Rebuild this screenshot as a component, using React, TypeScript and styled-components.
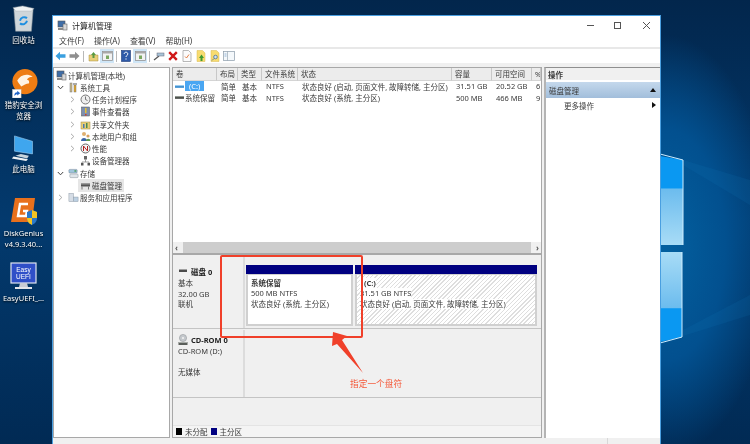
import React from 'react'
import styled, { createGlobalStyle } from 'styled-components'

const GlobalStyle = createGlobalStyle`
  html, body {
    margin: 0;
    padding: 0;
    background: #03264a;
  }
  * {
    box-sizing: border-box;
  }
`

const Screen = styled.div`
  position: relative;
  display: flex;
  width: 750px;
  height: 444px;
  overflow: hidden;
  font-family: 'Noto Sans', 'Noto Sans CJK SC', sans-serif;
  font-size: 7.5px;
  color: #3a3a3a;
  background: radial-gradient(ellipse 110px 210px at 665px 245px, #03609f 0%, #02508f 55%, rgba(2, 60, 110, 0) 100%),
    linear-gradient(180deg, #02264c 0%, #033a6e 50%, #012a54 100%);
  filter: blur(0.4px);
`
const Wallpaper = styled.svg`
  position: absolute;
  top: 0;
  left: 660px;
`
const IconColumn = styled.div`
  display: flex;
  flex-direction: column;
  flex: none;
  align-items: center;
  width: 47px;
  margin-top: 3px;
`
const DesktopItem = styled.div<{ $top: number }>`
  display: flex;
  flex-direction: column;
  align-items: center;
  width: 47px;
  margin-top: ${(p) => p.$top}px;
`
const DesktopLabel = styled.div`
  margin-top: 2px;
  font-size: 7.5px;
  line-height: 11px;
  color: #fff;
  text-align: center;
  text-shadow: 0 1px 2px #000;
  white-space: pre-line;
`
const Window = styled.div`
  position: relative;
  display: flex;
  flex-direction: column;
  flex: none;
  width: 609px;
  height: 440px;
  margin-top: 15px;
  margin-left: 5px;
  background: #fff;
  border: 1px solid #4a9fe0;
`
const TitleBar = styled.div`
  display: flex;
  flex: none;
  gap: 4px;
  align-items: center;
  height: 18px;
  padding-left: 4px;
  font-size: 8px;
  color: #222;
`
const CaptionButtons = styled.div`
  display: flex;
  gap: 15px;
  align-items: center;
  margin-left: auto;
  margin-right: 9px;
`
const MenuBar = styled.div`
  display: flex;
  flex: none;
  gap: 10px;
  align-items: center;
  height: 15px;
  padding-left: 6px;
  font-size: 8px;
  border-bottom: 2px solid #e8e8e8;
`
const Toolbar = styled.div`
  display: flex;
  flex: none;
  align-items: center;
  height: 14px;
`
const ToolButton = styled.div<{ $active?: boolean }>`
  display: flex;
  align-items: center;
  justify-content: center;
  width: 14px;
  height: 14px;
  background: ${(p) => (p.$active ? '#cfe6f7' : 'transparent')};
`
const ToolSep = styled.div`
  width: 1px;
  height: 11px;
  margin: 0 2px;
  background: #b8b8b8;
`
const Content = styled.div`
  display: flex;
  flex: none;
  gap: 2px;
  padding-top: 4px;
  background: #f0f0f0;
`
const TreePanel = styled.div`
  flex: none;
  width: 117px;
  height: 371px;
  padding-top: 1px;
  background: #fff;
  border: 1px solid #a8a8a8;
`
const TreeRow = styled.div<{ $level: number }>`
  display: flex;
  align-items: center;
  height: 12.25px;
  padding-left: ${(p) => (p.$level === 0 ? 0 : (p.$level - 1) * 12)}px;
  white-space: nowrap;
`
const ChevronBox = styled.span`
  display: inline-flex;
  flex: none;
  align-items: center;
  justify-content: center;
  width: 12px;
`
const TreeLabel = styled.span<{ $selected?: boolean }>`
  display: inline-flex;
  align-items: center;
  height: 12.25px;
  padding-right: 2px;
  background: ${(p) => (p.$selected ? '#e6e6e6' : 'transparent')};
`
const TreeIcon = styled.span`
  display: inline-flex;
  flex: none;
  margin: 0 1px 0 2px;
`
const MainPanel = styled.div`
  display: flex;
  flex: none;
  flex-direction: column;
  width: 370px;
  height: 371px;
  border: 1px solid #a8a8a8;
`
const ListPanel = styled.div`
  display: flex;
  flex: none;
  flex-direction: column;
  height: 187px;
  background: #fff;
  border-bottom: 2px solid #a8a8a8;
`
const HeaderRow = styled.div`
  display: grid;
  flex: none;
  grid-template-columns: 44px 21px 24px 36px 154px 40px 40px 9px;
  height: 12.5px;
`
const HeaderCell = styled.div`
  display: flex;
  align-items: center;
  padding-left: 3px;
  overflow: hidden;
  background: #ececec;
  border-right: 1px solid #c8c8c8;
  border-bottom: 1px solid #d4d4d4;
  white-space: nowrap;
`
const DataRow = styled.div`
  display: grid;
  grid-template-columns: 44px 21px 24px 36px 154px 40px 40px 9px;
  height: 11.5px;
`
const DataCell = styled.div`
  display: flex;
  gap: 1px;
  align-items: center;
  padding-left: 4px;
  overflow: hidden;
  white-space: nowrap;
`
const VolumeCell = styled(DataCell)`
  padding-left: 2px;
`
const VolumeName = styled.span<{ $selected?: boolean }>`
  padding: 0 ${(p) => (p.$selected ? '4px' : '0')};
  color: ${(p) => (p.$selected ? '#fff' : 'inherit')};
  background: ${(p) => (p.$selected ? '#4aa6f2' : 'transparent')};
`
const Rows = styled.div`
  flex: 1;
`
const ScrollBar = styled.div`
  display: flex;
  flex: none;
  align-items: center;
  justify-content: space-between;
  height: 11px;
  padding: 0 2px;
  font-size: 8px;
  font-weight: 700;
  color: #555;
  background: linear-gradient(#f0f0f0, #f0f0f0) left/10px 100% no-repeat,
    linear-gradient(#f0f0f0, #f0f0f0) right/10px 100% no-repeat, #cdcdcd;
`
const GraphArea = styled.div`
  display: flex;
  flex: 1;
  flex-direction: column;
  background: #f0f0f0;
`
const DiskRow = styled.div<{ $height: number; $mt?: number }>`
  display: flex;
  flex: none;
  height: ${(p) => p.$height}px;
  margin-top: ${(p) => p.$mt ?? 0}px;
  border-bottom: 1px solid #c4c4c4;
`
const DiskLabel = styled.div<{ $pt: number }>`
  flex: none;
  width: 72px;
  padding: ${(p) => p.$pt}px 0 0 5px;
  line-height: 10.5px;
  border-right: 2px solid #dcdcdc;
`
const DiskName = styled.div`
  display: flex;
  gap: 3px;
  align-items: center;
  height: 12px;
  font-weight: 700;
  color: #222;
`
const PartitionRow = styled.div`
  display: flex;
  flex: 1;
  gap: 2px;
  padding: 10px 4px 2px 1px;
`
const Partition = styled.div<{ $grow: number }>`
  display: flex;
  flex: ${(p) => p.$grow};
  flex-direction: column;
  min-width: 0;
`
const PartitionHead = styled.div`
  flex: none;
  height: 9px;
  background: #000080;
`
const PartitionBody = styled.div<{ $hatched?: boolean }>`
  flex: 1;
  padding: 3px 3px 0 3px;
  line-height: 10.3px;
  background: ${(p) =>
    p.$hatched
      ? 'repeating-linear-gradient(135deg, #fff 0 2px, #dedede 2px 3px)'
      : '#fff'};
  border: 2px solid #d0d0d0;
  border-top-width: 1px;
`
const PartitionLine = styled.div<{ $bold?: boolean }>`
  width: fit-content;
  font-weight: ${(p) => (p.$bold ? 700 : 400)};
  white-space: nowrap;
  background: #fff;
`
const Spacer = styled.div`
  flex: 1;
`
const Legend = styled.div`
  display: flex;
  flex: none;
  gap: 3px;
  align-items: center;
  height: 12px;
  padding-left: 3px;
  background: #f4f4f4;
  border-top: 1px solid #e4e4e4;
`
const Swatch = styled.span<{ $color: string }>`
  width: 6px;
  height: 7px;
  background: ${(p) => p.$color};
`
const ActionsPanel = styled.div`
  flex: 1;
  height: 371px;
  background: #fff;
  border-top: 1px solid #8f8f8f;
  border-left: 2px solid #b4b4b4;
`
const ActionsTitle = styled.div`
  display: flex;
  align-items: center;
  height: 12px;
  padding-left: 2px;
  font-weight: 700;
  background: #f0f0f0;
`
const ActionsGroup = styled.div`
  display: flex;
  align-items: center;
  justify-content: space-between;
  height: 16px;
  margin-top: 2px;
  padding: 0 4px 0 3px;
  background: linear-gradient(#c4d8ec, #a2bedb);
`
const ActionsItem = styled.div`
  display: flex;
  align-items: center;
  justify-content: space-between;
  height: 14px;
  padding: 0 4px 0 18px;
`
const StatusBar = styled.div`
  flex: 1;
  background: linear-gradient(#d8d8d8, #d8d8d8) 554px 0/1px 100% no-repeat, #f0f0f0;
`
const Highlight = styled.div`
  position: absolute;
  top: 255px;
  left: 220px;
  width: 143px;
  height: 83px;
  border: 2px solid #f0402a;
  border-radius: 2px;
`
const CalloutArrow = styled.svg`
  position: absolute;
  top: 330px;
  left: 328px;
`
const CalloutText = styled.div`
  position: absolute;
  top: 378px;
  left: 350px;
  font-size: 8.7px;
  line-height: 12px;
  color: #f4593a;
`

const Monitor = () => (
  <svg width="11" height="11" viewBox="0 0 11 11">
    <rect x="1" y="1" width="7" height="6" fill="#3f6ea8" stroke="#555" strokeWidth=".6" />
    <rect x="6" y="4" width="4" height="6" fill="#d8d8d8" stroke="#666" strokeWidth=".6" />
    <rect x="1" y="8" width="5" height="2" fill="#8a8a8a" />
  </svg>
)
const Tools = () => (
  <svg width="11" height="11" viewBox="0 0 11 11">
    <rect x="2" y="1" width="2" height="9" fill="#c9b98a" stroke="#777" strokeWidth=".5" />
    <rect x="6" y="3" width="2" height="7" fill="#e8a820" stroke="#777" strokeWidth=".5" />
    <path d="M5 1h4v2H5z" fill="#aaa" />
  </svg>
)
const Clock = () => (
  <svg width="11" height="11" viewBox="0 0 11 11">
    <circle cx="5.5" cy="5.5" r="4.5" fill="#eee" stroke="#777" />
    <path d="M5.5 2.5v3l2 1" fill="none" stroke="#555" strokeWidth=".8" />
  </svg>
)
const EventLog = () => (
  <svg width="11" height="11" viewBox="0 0 11 11">
    <rect x="1.5" y="1" width="8" height="9" fill="#7d8fb0" stroke="#555" strokeWidth=".5" />
    <rect x="5" y="2" width="1.5" height="5" fill="#e8c030" />
    <rect x="5" y="8" width="1.5" height="1.5" fill="#d04020" />
  </svg>
)
const Share = () => (
  <svg width="11" height="11" viewBox="0 0 11 11">
    <rect x="1" y="3" width="9" height="7" fill="#e8cf78" stroke="#a08840" strokeWidth=".5" />
    <rect x="3" y="5" width="1.5" height="4" fill="#4a78b0" />
    <rect x="6" y="4" width="1.5" height="5" fill="#4a8a50" />
  </svg>
)
const Users = () => (
  <svg width="11" height="11" viewBox="0 0 11 11">
    <circle cx="4" cy="3" r="2" fill="#e0b070" />
    <path d="M1 10c0-4 6-4 6 0z" fill="#3a64a8" />
    <circle cx="8" cy="5" r="1.6" fill="#d8a060" />
    <path d="M6 10c0-3 4.5-3 4.5 0z" fill="#5a9a50" />
  </svg>
)
const Perf = () => (
  <svg width="11" height="11" viewBox="0 0 11 11">
    <circle cx="5.5" cy="5.5" r="4.5" fill="#f4f4f4" stroke="#666" />
    <path d="M3.5 8V3l4 5V3" fill="none" stroke="#b02020" strokeWidth="1" />
  </svg>
)
const Devices = () => (
  <svg width="11" height="11" viewBox="0 0 11 11">
    <rect x="4" y="1" width="3" height="3.5" fill="#666" />
    <path d="M5.5 4.5V7M2 9V7h7v2" fill="none" stroke="#777" strokeWidth=".7" />
    <rect x="1" y="8" width="2.5" height="2.5" fill="#555" />
    <rect x="7.5" y="8" width="2.5" height="2.5" fill="#555" />
  </svg>
)
const Storage = () => (
  <svg width="11" height="11" viewBox="0 0 12 11">
    <rect x="1" y="1" width="9" height="4" rx="1" fill="#9fc4dc" stroke="#708090" strokeWidth=".5" />
    <rect x="2" y="6" width="9" height="4" rx="1" fill="#dfe5ea" stroke="#808890" strokeWidth=".5" />
    <rect x="7" y="2" width="2" height="1.5" fill="#4a9a50" />
  </svg>
)
const DiskManage = () => (
  <svg width="11" height="11" viewBox="0 0 11 11">
    <rect x="1" y="3.5" width="9" height="3" fill="#555" />
    <rect x="1" y="3.5" width="9" height="1" fill="#999" />
    <path d="M2 6.5v3M8.5 6.5v3" stroke="#777" />
  </svg>
)
const DiskBar = () => (
  <svg width="10" height="11" viewBox="0 0 10 11">
    <rect x="1" y="2" width="8" height="3" fill="#4a4a4a" />
    <rect x="1" y="2" width="8" height="1" fill="#a0a0a0" />
  </svg>
)
const CdDrive = () => (
  <svg width="10" height="12" viewBox="0 0 10 12">
    <circle cx="5" cy="4" r="3.6" fill="#c4c8cc" stroke="#8a8e92" strokeWidth=".5" />
    <circle cx="5" cy="4" r="1" fill="#f4f4f4" />
    <rect x=".5" y="8" width="9" height="3" fill="#5a5e5a" />
    <rect x=".5" y="8" width="9" height="1" fill="#a8aca8" />
  </svg>
)
const Services = () => (
  <svg width="11" height="11" viewBox="0 0 12 11">
    <rect x="1" y="1" width="5" height="9" fill="#d6dde6" stroke="#8a96a4" strokeWidth=".5" />
    <rect x="6" y="5" width="5" height="5" fill="#bcd0e2" stroke="#8a96a4" strokeWidth=".5" />
  </svg>
)
const VolumeIcon = ({ dark }: { dark?: boolean }) => (
  <svg width="9" height="5" viewBox="0 0 10 5">
    <rect x="0" y="1" width="10" height="3" fill={dark ? '#4a4f4a' : '#3f8fd0'} />
    <rect x="0" y="1" width="10" height="1" fill={dark ? '#9aa09a' : '#a8d4f4'} />
  </svg>
)
const OpenChevron = () => (
  <svg width="7" height="5" viewBox="0 0 7 5">
    <path d="M.8 1 3.5 3.8 6.2 1" fill="none" stroke="#444" strokeWidth="1" />
  </svg>
)
const ClosedChevron = () => (
  <svg width="5" height="7" viewBox="0 0 5 7">
    <path d="M1 .8 3.8 3.5 1 6.2" fill="none" stroke="#a8a8a8" strokeWidth="1" />
  </svg>
)

const ArrowTool = ({ color, flip }: { color: string; flip?: boolean }) => (
  <svg width="11" height="10" viewBox="0 0 11 10" style={flip ? { transform: 'scaleX(-1)' } : undefined}>
    <path d="M0.5 5 5 .8v2.4h5.5v3.6H5v2.4z" fill={color} />
  </svg>
)
const FolderUp = () => (
  <svg width="11" height="11" viewBox="0 0 11 11">
    <path d="M1 4h9v6H1z" fill="#e8cf78" stroke="#a88c3c" strokeWidth=".5" />
    <path d="M5.5 1 8 4H6.5v3h-2V4H3z" fill="#5a9a40" />
  </svg>
)
const PaneTool = () => (
  <svg width="11" height="10" viewBox="0 0 11 10">
    <rect x=".5" y=".5" width="10" height="9" fill="#f2f2f2" stroke="#888" strokeWidth=".7" />
    <rect x=".5" y=".5" width="10" height="2" fill="#a8a8a8" />
    <rect x="4" y="4.5" width="3" height="3.5" fill="#7aa860" />
  </svg>
)
const HelpTool = () => (
  <svg width="10" height="12" viewBox="0 0 10 12">
    <rect x=".5" y=".5" width="9" height="11" fill="#2f5aa8" stroke="#1c3a78" strokeWidth=".6" />
    <path d="M3.2 4c0-2.4 3.6-2.4 3.6 0 0 1.4-1.8 1.4-1.8 3M5 8.4v1.2" fill="none" stroke="#fff" strokeWidth="1" />
  </svg>
)
const ConnectTool = () => (
  <svg width="12" height="10" viewBox="0 0 12 10">
    <path d="M1 9 6 5" stroke="#555" strokeWidth="1.2" />
    <rect x="4" y="2" width="7" height="3" fill="#a8c4d8" stroke="#667" strokeWidth=".5" />
  </svg>
)
const DeleteTool = () => (
  <svg width="10" height="10" viewBox="0 0 10 10">
    <path d="M1.2 1.2 8.8 8.8M8.8 1.2 1.2 8.8" stroke="#d01818" strokeWidth="2.4" />
  </svg>
)
const DocTool = () => (
  <svg width="10" height="12" viewBox="0 0 10 12">
    <path d="M1 .5h5.5L9 3v8.5H1z" fill="#fbfbfb" stroke="#999" strokeWidth=".7" />
    <path d="M3 6.5 4.5 8 7 4.5" fill="none" stroke="#e07030" strokeWidth=".9" />
  </svg>
)
const YellowDoc = ({ kind }: { kind: 'up' | 'search' }) => (
  <svg width="10" height="12" viewBox="0 0 10 12">
    <path d="M1 .5h5.5L9 3v8.5H1z" fill="#f8dc70" stroke="#d8b850" strokeWidth=".5" />
    {kind === 'up' ? (
      <path d="M5.5 4.5 8 8H6.5v3h-2V8H3z" fill="#3f9a30" />
    ) : (
      <g fill="none" stroke="#5a7a9a" strokeWidth=".9">
        <circle cx="5.5" cy="7" r="1.8" fill="#cfe4f4" />
        <path d="M4 8.5 2 10.5" />
      </g>
    )}
  </svg>
)
const ListTool = () => (
  <svg width="12" height="10" viewBox="0 0 12 10">
    <rect x=".5" y=".5" width="11" height="9" fill="#f4f8fb" stroke="#8a9aa8" strokeWidth=".7" />
    <path d="M4.5 .5v9" stroke="#8a9aa8" strokeWidth=".6" />
    <path d="M1.5 3h2M1.5 5h2" stroke="#6a9ac8" strokeWidth=".7" />
  </svg>
)

const RecycleBin = () => (
  <svg width="23" height="28" viewBox="0 0 26 32">
    <path d="M2 5 4 30h18l2-25z" fill="#cfd6da" stroke="#8a949a" strokeWidth=".6" />
    <path d="M1 3 12 1l13 3-3 3H4z" fill="#eef1f3" stroke="#9aa4aa" strokeWidth=".5" />
    <path d="M9 18a5 5 0 0 1 8-3M17 18a5 5 0 0 1-8 3" fill="none" stroke="#1f8fe0" strokeWidth="2.2" />
  </svg>
)
const BrowserIcon = () => (
  <svg width="30" height="29" viewBox="0 0 30 30">
    <circle cx="16" cy="13" r="13" fill="#ee7d14" />
    <path d="M8 12c3-6 10-8 16-4-3 0-5 1-6 3 2 0 3 2 2 4-3 0-5 2-8 3-1-2-3-3-4-6z" fill="#fff4e4" />
    <rect x="3" y="21" width="9" height="9" fill="#fff" stroke="#bbb" strokeWidth=".4" />
    <path d="M5 28c0-3 1-4 3-4v-1.5l3 2.5-3 2.5V26c-1 0-2 .6-3 2z" fill="#1f64c8" />
  </svg>
)
const PcIcon = () => (
  <svg width="29" height="27" viewBox="0 0 30 30">
    <path d="M5 1 25 7v14L5 18z" fill="#3fa6ee" stroke="#a8d4f4" strokeWidth=".6" />
    <path d="M12 21l9 2-2 3-13-3z" fill="#c8d4dc" />
    <path d="M4 24l16 3-2 2L2 26z" fill="#eef2f4" />
  </svg>
)
const DiskGeniusIcon = () => (
  <svg width="30" height="29" viewBox="0 0 30 29">
    <path d="M6 1h20l-3 24H2z" fill="#e8701c" />
    <path d="M19 7h-8l-2 12h8l1-5h-4" fill="none" stroke="#fff" strokeWidth="2.4" />
    <path d="M18 15l5-2 5 2v6c0 4-3 6-5 7-2-1-5-3-5-7z" fill="#2a78c8" />
    <path d="M23 13l5 2v6h-5zM18 21h5v7c-2-1-5-3-5-7z" fill="#f4c420" />
  </svg>
)
const UefiIcon = () => (
  <svg width="30" height="29" viewBox="0 0 30 29">
    <rect x="2" y="1" width="25" height="20" fill="#2f4fc8" stroke="#dfe4ee" strokeWidth="1.2" />
    <text x="14.5" y="10" fontSize="6.5" fill="#fff" textAnchor="middle" fontFamily="Liberation Sans">Easy</text>
    <text x="14.5" y="17" fontSize="6.5" fill="#fff" textAnchor="middle" fontFamily="Liberation Sans">UEFI</text>
    <path d="M11 21h7l1 4h-9z" fill="#c8ccd4" />
    <rect x="6" y="25" width="17" height="2" fill="#e4e6ea" />
  </svg>
)

const tree: { level: number; chevron?: 'open' | 'closed'; icon: React.ReactNode; text: string; selected?: boolean }[] = [
  { level: 0, icon: <Monitor />, text: '计算机管理(本地)' },
  { level: 1, chevron: 'open', icon: <Tools />, text: '系统工具' },
  { level: 2, chevron: 'closed', icon: <Clock />, text: '任务计划程序' },
  { level: 2, chevron: 'closed', icon: <EventLog />, text: '事件查看器' },
  { level: 2, chevron: 'closed', icon: <Share />, text: '共享文件夹' },
  { level: 2, chevron: 'closed', icon: <Users />, text: '本地用户和组' },
  { level: 2, chevron: 'closed', icon: <Perf />, text: '性能' },
  { level: 2, icon: <Devices />, text: '设备管理器' },
  { level: 1, chevron: 'open', icon: <Storage />, text: '存储' },
  { level: 2, icon: <DiskManage />, text: '磁盘管理', selected: true },
  { level: 1, chevron: 'closed', icon: <Services />, text: '服务和应用程序' },
]

const columns = ['卷', '布局', '类型', '文件系统', '状态', '容量', '可用空间', '%']

const App = () => {
  return (
    <Screen>
      <GlobalStyle />
      <Wallpaper width="90" height="444" viewBox="0 0 90 444">
        <defs>
          <linearGradient id="upper" x1="0" y1="0" x2="0" y2="1">
            <stop offset="0" stopColor="#0a98f2" />
            <stop offset="0.36" stopColor="#0a98f2" />
            <stop offset="0.37" stopColor="#6cbcee" />
            <stop offset="1" stopColor="#a8dcf6" />
          </linearGradient>
          <linearGradient id="lower" x1="0" y1="0" x2="0" y2="1">
            <stop offset="0" stopColor="#a8dcf6" />
            <stop offset="0.62" stopColor="#6cbcee" />
            <stop offset="0.63" stopColor="#0a98f2" />
            <stop offset="1" stopColor="#0a98f2" />
          </linearGradient>
        </defs>
        <path d="M23 160 90 180V205L23 165z" fill="#1a80c8" opacity=".12" />
        <path d="M23 336 90 315V295L23 330z" fill="#1a80c8" opacity=".12" />
        <path d="M0 156 23 160V245H0z" fill="url(#upper)" />
        <path d="M0 252H22V337L0 342z" fill="url(#lower)" />
        <path d="M0 154 23 160V245" fill="none" stroke="#cfeeff" strokeWidth="1" />
        <path d="M22 252V337L0 343" fill="none" stroke="#cfeeff" strokeWidth="1" />
      </Wallpaper>

      <IconColumn>
        <DesktopItem $top={2}>
          <RecycleBin />
          <DesktopLabel>回收站</DesktopLabel>
        </DesktopItem>
        <DesktopItem $top={23}>
          <BrowserIcon />
          <DesktopLabel>{'猎豹安全浏\n览器'}</DesktopLabel>
        </DesktopItem>
        <DesktopItem $top={13}>
          <PcIcon />
          <DesktopLabel>此电脑</DesktopLabel>
        </DesktopItem>
        <DesktopItem $top={22}>
          <DiskGeniusIcon />
          <DesktopLabel>{'DiskGenius\nv4.9.3.40...'}</DesktopLabel>
        </DesktopItem>
        <DesktopItem $top={12}>
          <UefiIcon />
          <DesktopLabel>EasyUEFI_...</DesktopLabel>
        </DesktopItem>
      </IconColumn>

      <Window>
        <TitleBar>
          <Monitor />
          计算机管理
          <CaptionButtons>
            <svg width="9" height="9" viewBox="0 0 9 9">
              <path d="M1 4.5h7" stroke="#555" />
            </svg>
            <svg width="9" height="9" viewBox="0 0 9 9" style={{ marginLeft: 3 }}>
              <rect x="1.5" y="1.5" width="6" height="6" fill="none" stroke="#555" />
            </svg>
            <svg width="9" height="9" viewBox="0 0 9 9" style={{ marginLeft: 5 }}>
              <path d="M1 1l7 7M8 1 1 8" stroke="#555" />
            </svg>
          </CaptionButtons>
        </TitleBar>
        <MenuBar>
          <span>文件(F)</span>
          <span>操作(A)</span>
          <span>查看(V)</span>
          <span>帮助(H)</span>
        </MenuBar>
        <Toolbar>
          <ToolButton>
            <ArrowTool color="#3aa0e0" />
          </ToolButton>
          <ToolButton>
            <ArrowTool color="#8f8f8f" flip />
          </ToolButton>
          <ToolSep />
          <ToolButton>
            <FolderUp />
          </ToolButton>
          <ToolButton $active>
            <PaneTool />
          </ToolButton>
          <ToolSep />
          <ToolButton>
            <HelpTool />
          </ToolButton>
          <ToolButton $active>
            <PaneTool />
          </ToolButton>
          <ToolSep />
          <ToolButton>
            <ConnectTool />
          </ToolButton>
          <ToolButton>
            <DeleteTool />
          </ToolButton>
          <ToolButton>
            <DocTool />
          </ToolButton>
          <ToolButton>
            <YellowDoc kind="up" />
          </ToolButton>
          <ToolButton>
            <YellowDoc kind="search" />
          </ToolButton>
          <ToolButton>
            <ListTool />
          </ToolButton>
        </Toolbar>
        <Content>
          <TreePanel>
            {tree.map((row) => (
              <TreeRow key={row.text} $level={row.level}>
                {row.level > 0 && (
                  <ChevronBox>
                    {row.chevron === 'open' && <OpenChevron />}
                    {row.chevron === 'closed' && <ClosedChevron />}
                  </ChevronBox>
                )}
                <TreeLabel $selected={row.selected}>
                  <TreeIcon>{row.icon}</TreeIcon>
                  {row.text}
                </TreeLabel>
              </TreeRow>
            ))}
          </TreePanel>

          <MainPanel>
            <ListPanel>
              <HeaderRow>
                {columns.map((c) => (
                  <HeaderCell key={c}>{c}</HeaderCell>
                ))}
              </HeaderRow>
              <Rows>
                <DataRow>
                  <VolumeCell>
                    <VolumeIcon />
                    <VolumeName $selected>(C:)</VolumeName>
                  </VolumeCell>
                  <DataCell>简单</DataCell>
                  <DataCell>基本</DataCell>
                  <DataCell>NTFS</DataCell>
                  <DataCell>状态良好 (启动, 页面文件, 故障转储, 主分区)</DataCell>
                  <DataCell>31.51 GB</DataCell>
                  <DataCell>20.52 GB</DataCell>
                  <DataCell>6</DataCell>
                </DataRow>
                <DataRow>
                  <VolumeCell>
                    <VolumeIcon dark />
                    <VolumeName>系统保留</VolumeName>
                  </VolumeCell>
                  <DataCell>简单</DataCell>
                  <DataCell>基本</DataCell>
                  <DataCell>NTFS</DataCell>
                  <DataCell>状态良好 (系统, 主分区)</DataCell>
                  <DataCell>500 MB</DataCell>
                  <DataCell>466 MB</DataCell>
                  <DataCell>9</DataCell>
                </DataRow>
              </Rows>
              <ScrollBar>
                <span>‹</span>
                <span>›</span>
              </ScrollBar>
            </ListPanel>
            <GraphArea>
              <DiskRow $height={74}>
                <DiskLabel $pt={11}>
                  <DiskName>
                    <DiskBar />
                    磁盘 0
                  </DiskName>
                  <div>基本</div>
                  <div>32.00 GB</div>
                  <div>联机</div>
                </DiskLabel>
                <PartitionRow>
                  <Partition $grow={107}>
                    <PartitionHead />
                    <PartitionBody>
                      <PartitionLine $bold>系统保留</PartitionLine>
                      <PartitionLine>500 MB NTFS</PartitionLine>
                      <PartitionLine>状态良好 (系统, 主分区)</PartitionLine>
                    </PartitionBody>
                  </Partition>
                  <Partition $grow={182}>
                    <PartitionHead />
                    <PartitionBody $hatched>
                      <PartitionLine $bold>&nbsp;&nbsp;(C:)</PartitionLine>
                      <PartitionLine>31.51 GB NTFS</PartitionLine>
                      <PartitionLine>状态良好 (启动, 页面文件, 故障转储, 主分区)</PartitionLine>
                    </PartitionBody>
                  </Partition>
                </PartitionRow>
              </DiskRow>
              <DiskRow $height={68} $mt={1}>
                <DiskLabel $pt={4}>
                  <DiskName>
                    <CdDrive />
                    CD-ROM 0
                  </DiskName>
                  <div>CD-ROM (D:)</div>
                  <div>&nbsp;</div>
                  <div>无媒体</div>
                </DiskLabel>
              </DiskRow>
              <Spacer />
              <Legend>
                <Swatch $color="#000" />
                未分配
                <Swatch $color="#000080" />
                主分区
              </Legend>
            </GraphArea>
          </MainPanel>

          <ActionsPanel>
            <ActionsTitle>操作</ActionsTitle>
            <ActionsGroup>
              磁盘管理
              <svg width="6" height="4" viewBox="0 0 6 4">
                <path d="M0 4 3 0l3 4z" fill="#111" />
              </svg>
            </ActionsGroup>
            <ActionsItem>
              更多操作
              <svg width="4" height="6" viewBox="0 0 4 6">
                <path d="M0 0l4 3-4 3z" fill="#111" />
              </svg>
            </ActionsItem>
          </ActionsPanel>
        </Content>
        <StatusBar />
      </Window>

      <Highlight />
      <CalloutArrow width="40" height="46" viewBox="0 0 40 46">
        <path d="M5 2 19 6 14 10 35 43 9 14 4 16z" fill="#f0402a" />
      </CalloutArrow>
      <CalloutText>指定一个盘符</CalloutText>
    </Screen>
  )
}

export default App
